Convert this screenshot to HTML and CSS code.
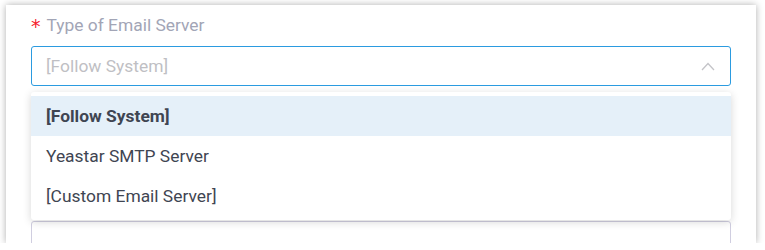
FILE: index.html
```html
<!DOCTYPE html>
<html lang="en">
<head>
    <meta charset="UTF-8">
    <meta name="viewport" content="width=device-width, initial-scale=1.0">
    <title>Email Server</title>
    <link rel="stylesheet" href="styles.css">
</head>
<body>
    <div class="card">
        <div class="field">
            <label class="field-label"><span class="required">*</span>Type of Email Server</label>
            <div class="select is-open">
                <span class="select-placeholder">[Follow System]</span>
                <svg class="select-arrow" width="14" height="9" viewBox="0 0 14 9">
                    <polyline points="1,8 7,1.5 13,8" fill="none" stroke="#c4c4c8" stroke-width="1.3"/>
                </svg>
            </div>
            <ul class="dropdown">
                <li class="dropdown-item is-selected">[Follow System]</li>
                <li class="dropdown-item">Yeastar SMTP Server</li>
                <li class="dropdown-item">[Custom Email Server]</li>
            </ul>
        </div>
        <div class="field field-next">
            <div class="select select-idle"></div>
        </div>
    </div>
</body>
</html>
```

FILE: styles.css
```css
body {
    margin: 0;
    background: #fff;
    font-family: Roboto, 'Noto Sans', sans-serif;
}

.card {
    margin: 5px 9px 0 6px;
    height: 238px;
    background: #fff;
    box-shadow: 0 0 7px rgba(0, 0, 0, 0.32);
    padding: 8px 25px 0;
    box-sizing: border-box;
    overflow: hidden;
}

.field {
    position: relative;
}

.field-label {
    display: flex;
    align-items: center;
    font-size: 17.4px;
    line-height: 24px;
    color: #a2a5b6;
    margin-bottom: 9px;
}

.required {
    color: #f5222d;
    margin-right: 6px;
    font-family: 'DejaVu Sans', sans-serif;
    font-size: 19px;
    position: relative;
    top: 1px;
}

.select {
    height: 40px;
    box-sizing: border-box;
    border: 1px solid #d0cee0;
    border-radius: 3px;
    display: flex;
    align-items: center;
    justify-content: space-between;
    padding: 0 14px 0 14px;
}

.select.is-open {
    border-color: #2b9be0;
}

.select-placeholder {
    font-size: 17.4px;
    color: #bfbfc4;
}

.select-arrow {
    margin-right: 1px;
}

.dropdown {
    position: absolute;
    top: 79px;
    left: 0;
    right: 0;
    margin: 0;
    padding: 4px 0;
    list-style: none;
    background: #fff;
    border-radius: 3px;
    box-shadow: 0 2px 8px rgba(0, 0, 0, 0.16);
    z-index: 2;
}

.dropdown-item {
    height: 40px;
    line-height: 40px;
    padding: 0 15px;
    font-size: 17.4px;
    color: #3f4552;
}

.dropdown-item.is-selected {
    background: #e5f0f9;
    font-weight: bold;
}

.field-next {
    margin-top: 135px;
}

.select-idle {
    height: 60px;
}
```
